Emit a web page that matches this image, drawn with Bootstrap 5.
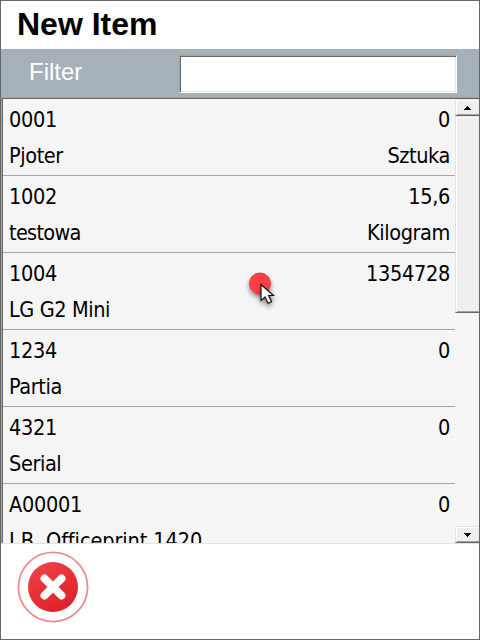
<!DOCTYPE html>
<html lang="en">
<head>
<meta charset="utf-8">
<meta name="viewport" content="width=device-width, initial-scale=1">
<title>New Item</title>
<link href="https://cdn.jsdelivr.net/npm/bootstrap@5.3.0/dist/css/bootstrap.min.css" rel="stylesheet">
<style>
body{height:640px;overflow:hidden;color:#000;font-family:"Liberation Sans",Arial,sans-serif}
.window-frame{width:480px;height:640px;border:1px solid #666}
.title-bar{height:48px;padding-left:16px}
.title-bar h1{font-size:32px;line-height:46px}
.filter-bar{height:48px;background:#a6b0b9;padding:6px 22px 4px 28px}
.filter-bar label{font-size:24px;line-height:34px;color:#fff}
.filter-input{width:278px;height:38px;border:1px solid;border-color:#a0a0a0 #fff #fff #a0a0a0;border-radius:0;box-shadow:inset 1px 1px #696969,inset -1px -1px #e3e3e3;background:#fff;outline:0}
.list-frame{height:447px;border-style:solid;border-width:1px 0 1px 1px;border-color:#a0a0a0 #e3e3e3 #e3e3e3 #a0a0a0}
.list-inner{border-top:1px solid #696969;border-left:1px solid #696969}
.item-list{background:#f5f5f5;font-family:"DejaVu Sans Condensed","DejaVu Sans",sans-serif;font-stretch:condensed;font-size:21.5px;letter-spacing:-.3px}
.item-row{height:77px;border-bottom:1px solid #a5a5a5;padding:2px 5px 0 6px}
.item-row>div{height:36px;line-height:37px}
.words{letter-spacing:-.4px}
.words.tight{letter-spacing:-.7px}
.words.wide{letter-spacing:-.08px}
.scroll-rail{width:24px;background:repeating-conic-gradient(#eee 0 25%,#fff 0 50%) 0 0/2px 2px}
.scroll-face{background:#efefef;border:1px solid;border-color:#e3e3e3 #696969 #696969 #e3e3e3;border-right-width:0;box-shadow:inset 1px 1px #fff,inset 0 -1px #a0a0a0}
.scroll-end{height:17px}
.scroll-thumb{height:197px}
.action-bar{padding:7px 0 0 16px}
.pointer{position:absolute;left:242px;top:266px}
</style>
</head>
<body>
<main class="window-frame d-flex flex-column bg-white position-relative">
  <header class="title-bar flex-shrink-0"><h1 class="fw-bold m-0">New Item</h1></header>
  <div class="filter-bar d-flex justify-content-between flex-shrink-0">
    <label for="filter">Filter</label>
    <input id="filter" class="filter-input" type="text">
  </div>
  <section class="list-frame d-flex flex-shrink-0">
    <div class="list-inner d-flex flex-fill overflow-hidden">
      <div class="item-list flex-fill overflow-hidden">
        <div class="item-row"><div class="d-flex justify-content-between"><span>0001</span><span>0</span></div><div class="words d-flex justify-content-between"><span>Pjoter</span><span>Sztuka</span></div></div>
        <div class="item-row"><div class="d-flex justify-content-between"><span>1002</span><span>15,6</span></div><div class="words tight d-flex justify-content-between"><span>testowa</span><span class="words">Kilogram</span></div></div>
        <div class="item-row"><div class="d-flex justify-content-between"><span>1004</span><span>1354728</span></div><div class="words"><span>LG G2 Mini</span></div></div>
        <div class="item-row"><div class="d-flex justify-content-between"><span>1234</span><span>0</span></div><div class="words"><span>Partia</span></div></div>
        <div class="item-row"><div class="d-flex justify-content-between"><span>4321</span><span>0</span></div><div class="words"><span>Serial</span></div></div>
        <div class="item-row"><div class="d-flex justify-content-between"><span>A00001</span><span>0</span></div><div class="words wide"><span>J.B. Officeprint 1420</span></div></div>
      </div>
      <div class="scroll-rail d-flex flex-column flex-shrink-0">
        <div class="scroll-face scroll-end d-flex align-items-center justify-content-center"><svg width="7" height="4" shape-rendering="crispEdges"><path d="M3 0h1v1h1v1h1v1h1v1H0V3h1V2h1V1h1z"/></svg></div>
        <div class="scroll-face scroll-thumb"></div>
        <div class="scroll-face scroll-end mt-auto d-flex align-items-center justify-content-center"><svg width="7" height="4" shape-rendering="crispEdges"><path d="M0 0h7v1H6v1H5v1H4v1H3V3H2V2H1V1H0z"/></svg></div>
      </div>
    </div>
  </section>
  <footer class="action-bar">
    <svg class="d-block" width="72" height="72" viewBox="0 0 72 72" role="img" aria-label="Cancel">
      <defs><linearGradient id="red" x1=".2" y1="0" x2=".75" y2="1"><stop offset="0" stop-color="#ee4148"/><stop offset="1" stop-color="#df1f26"/></linearGradient></defs>
      <circle cx="36" cy="36" r="34.6" fill="#fff" stroke="#ec8d90" stroke-width="1.8"/>
      <circle cx="36" cy="36" r="25" fill="url(#red)"/>
      <path d="M27.5 27.5l17 17M44.5 27.5l-17 17" stroke="#fff" stroke-width="8" stroke-linecap="round"/>
    </svg>
  </footer>
  <svg class="pointer" width="40" height="46" viewBox="0 0 40 46" aria-hidden="true">
    <defs><filter id="shade" x="-50%" y="-50%" width="200%" height="200%"><feDropShadow dx="0" dy="3" stdDeviation="2.5" flood-opacity=".45"/></filter></defs>
    <g filter="url(#shade)"><circle cx="17" cy="16.5" r="10.5" fill="#fb4146" stroke="#d9383e"/></g>
    <g filter="url(#shade)"><path d="M18 17.5v16l4-3.6 3 6.4 3.6-1.6-3-6.2h4.9z" fill="#fff" stroke="#111" stroke-width="1.2"/></g>
  </svg>
</main>
<script src="https://cdn.jsdelivr.net/npm/bootstrap@5.3.0/dist/js/bootstrap.bundle.min.js"></script>
</body>
</html>
